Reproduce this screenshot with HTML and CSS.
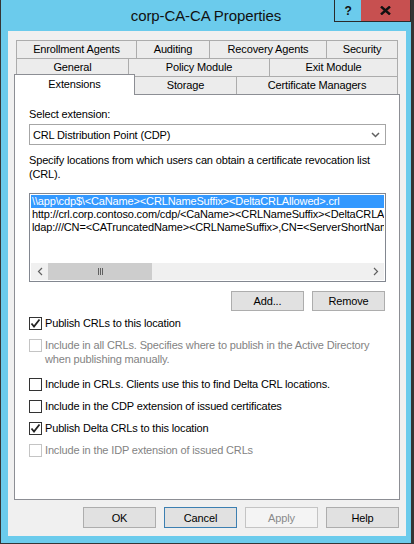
FILE: index.html
```html
<!DOCTYPE html>
<html lang="en">

<head>
    <meta charset="UTF-8">
    <meta name="viewport" content="width=device-width, initial-scale=1.0">
    <title>corp-CA-CA Properties</title>
    <link rel="stylesheet" href="styles.css">
</head>

<body>
    <div class="window">
        <div class="titlebar">
            <div></div>
            <div class="title">corp-CA-CA Properties</div>
            <div class="caption-buttons">
                <div class="cap help">?</div>
                <div class="cap close">
                    <svg width="11" height="9" viewBox="0 0 11 9">
                        <path d="M1 0.5 L10 8.5 M10 0.5 L1 8.5" stroke="#111" stroke-width="2.4" fill="none" />
                    </svg>
                </div>
            </div>
        </div>

        <div class="client">
            <div class="tabs">
                <div class="tab-row">
                    <div class="tab" style="width: 121px">Enrollment Agents</div>
                    <div class="tab" style="width: 74px">Auditing</div>
                    <div class="tab" style="width: 118px">Recovery Agents</div>
                    <div class="tab" style="width: 72px">Security</div>
                </div>
                <div class="tab-row">
                    <div class="tab" style="width: 113px">General</div>
                    <div class="tab" style="width: 142px">Policy Module</div>
                    <div class="tab" style="width: 129px">Exit Module</div>
                </div>
                <div class="tab-row">
                    <div class="tab selected" style="width: 121px">Extensions</div>
                    <div class="tab" style="width: 103px">Storage</div>
                    <div class="tab" style="width: 162px">Certificate Managers</div>
                </div>
            </div>

            <div class="page">
                <div class="label">Select extension:</div>
                <div class="dropdown">
                    <span>CRL Distribution Point (CDP)</span>
                    <svg width="9" height="6" viewBox="0 0 9 6">
                        <path d="M1 1 L4.5 4.5 L8 1" stroke="#606060" stroke-width="1.5" fill="none" />
                    </svg>
                </div>
                <div class="description">
                    Specify locations from which users can obtain a certificate revocation list (CRL).
                </div>

                <div class="listbox">
                    <div class="list-items">
                        <div class="item selected">\\app\cdp$\&lt;CaName&gt;&lt;CRLNameSuffix&gt;&lt;DeltaCRLAllowed&gt;.crl</div>
                        <div class="item">http://crl.corp.contoso.com/cdp/&lt;CaName&gt;&lt;CRLNameSuffix&gt;&lt;DeltaCRLAllowed&gt;.crl</div>
                        <div class="item">ldap:///CN=&lt;CATruncatedName&gt;&lt;CRLNameSuffix&gt;,CN=&lt;ServerShortName&gt;,CN=CDP</div>
                    </div>
                    <div class="hscroll">
                        <div class="arrow">
                            <svg width="6" height="9" viewBox="0 0 6 9">
                                <path d="M5 1 L1.5 4.5 L5 8" stroke="#606060" stroke-width="1.2" fill="none" />
                            </svg>
                        </div>
                        <div class="track">
                            <div class="thumb"><span class="grip"></span><span class="grip"></span><span class="grip"></span></div>
                        </div>
                        <div class="arrow">
                            <svg width="6" height="9" viewBox="0 0 6 9">
                                <path d="M1 1 L4.5 4.5 L1 8" stroke="#606060" stroke-width="1.2" fill="none" />
                            </svg>
                        </div>
                    </div>
                </div>

                <div class="list-buttons">
                    <button class="btn">Add...</button>
                    <button class="btn">Remove</button>
                </div>

                <div class="options">
                    <div class="check-row">
                        <span class="checkbox checked">
                            <svg width="11" height="11" viewBox="0 0 11 11">
                                <path d="M1.5 5.5 L4 8.5 L9.5 1.5" stroke="#222" stroke-width="1.8" fill="none" />
                            </svg>
                        </span>
                        <span>Publish CRLs to this location</span>
                    </div>
                    <div class="check-row disabled">
                        <span class="checkbox"></span>
                        <span>Include in all CRLs. Specifies where to publish in the Active Directory<br>when publishing manually.</span>
                    </div>
                    <div class="check-row spaced">
                        <span class="checkbox"></span>
                        <span>Include in CRLs. Clients use this to find Delta CRL locations.</span>
                    </div>
                    <div class="check-row">
                        <span class="checkbox"></span>
                        <span>Include in the CDP extension of issued certificates</span>
                    </div>
                    <div class="check-row">
                        <span class="checkbox checked">
                            <svg width="11" height="11" viewBox="0 0 11 11">
                                <path d="M1.5 5.5 L4 8.5 L9.5 1.5" stroke="#222" stroke-width="1.8" fill="none" />
                            </svg>
                        </span>
                        <span>Publish Delta CRLs to this location</span>
                    </div>
                    <div class="check-row disabled">
                        <span class="checkbox"></span>
                        <span>Include in the IDP extension of issued CRLs</span>
                    </div>
                </div>
            </div>

            <div class="dialog-buttons">
                <button class="btn">OK</button>
                <button class="btn default">Cancel</button>
                <button class="btn" disabled>Apply</button>
                <button class="btn">Help</button>
            </div>
        </div>
    </div>
</body>

</html>
```

FILE: styles.css
```css
* {
    margin: 0;
    padding: 0;
    box-sizing: border-box;
}

body {
    font-family: "Liberation Sans", Arial, sans-serif;
    font-size: 11px;
    letter-spacing: -0.15px;
    color: #000;
    background-color: #6bcbec;
}

.window {
    width: 414px;
    height: 544px;
    background-color: #6bcbec;
    border-left: 1px solid #353535;
    border-right: 3px solid #353535;
    border-bottom: 1px solid #353535;
    display: flex;
    flex-direction: column;
}

/* title bar */

.titlebar {
    height: 31px;
    display: grid;
    grid-template-columns: 1fr auto 1fr;
    align-items: start;
}

.title {
    font-size: 15px;
    letter-spacing: -0.1px;
    line-height: 31px;
    color: #111;
}

.caption-buttons {
    justify-self: end;
    display: flex;
    height: 22px;
    border: 1px solid #2a2a2a;
    border-top: none;
}

.cap {
    display: flex;
    align-items: center;
    justify-content: center;
    height: 21px;
}

.help {
    width: 26px;
    font-weight: bold;
    font-size: 12px;
    color: #111;
}

.close {
    width: 49px;
    background-color: #c75050;
}

/* client area */

.client {
    margin-left: 7px;
    width: 398px;
    height: 505px;
    background-color: #f0f0f0;
    padding: 9px 6px 0;
}

.tabs {
    margin-left: 2px;
}

.tab-row {
    display: flex;
    align-items: flex-start;
}

.tab {
    flex: none;
    height: 18px;
    margin-left: -1px;
    border: 1px solid #acacac;
    border-bottom: none;
    background-color: #ececec;
    text-align: center;
    line-height: 17px;
}

.tab:first-child {
    margin-left: 0;
}

.tab.selected {
    position: relative;
    z-index: 1;
    height: 21px;
    margin: -2px 0 -1px -2px;
    background-color: #fff;
    border-color: #8c8e94;
    line-height: 19px;
}

.page {
    width: 386px;
    height: 406px;
    background-color: #fff;
    border: 1px solid #8c8e94;
    padding: 12px 13px 0 14px;
    line-height: 14px;
}

.label {
    margin-bottom: 3px;
}

.dropdown {
    height: 21px;
    border: 1px solid #a6a6a6;
    background-color: #fff;
    display: flex;
    align-items: center;
    justify-content: space-between;
    padding: 0 5px 0 3px;
}

.description {
    margin-top: 8px;
    width: 350px;
}

/* list of locations */

.listbox {
    margin-top: 12px;
    height: 89px;
    border: 1px solid #828790;
    padding: 1px;
    display: flex;
    flex-direction: column;
}

.list-items {
    flex: 1;
    overflow: hidden;
}

.item {
    height: 13px;
    line-height: 13px;
    padding-left: 1px;
    white-space: nowrap;
    overflow: hidden;
}

.item.selected {
    background-color: #3399ff;
    color: #fff;
}

.hscroll {
    height: 17px;
    display: flex;
    background-color: #f0f0f0;
}

.arrow {
    width: 17px;
    display: flex;
    align-items: center;
    justify-content: center;
}

.track {
    flex: 1;
    display: flex;
}

.thumb {
    width: 104px;
    background-color: #cdcdcd;
    display: flex;
    align-items: center;
    justify-content: center;
    gap: 1px;
}

.grip {
    width: 1px;
    height: 7px;
    background-color: #606060;
}

.list-buttons {
    margin-top: 9px;
    display: flex;
    justify-content: flex-end;
    gap: 8px;
    padding-right: 1px;
}

.btn {
    width: 73px;
    height: 21px;
    font-family: inherit;
    font-size: 11px;
    letter-spacing: -0.15px;
    color: #000;
    background-color: #e1e1e1;
    border: 1px solid #adadad;
}

.list-buttons .btn {
    height: 20px;
}

.btn.default {
    border-color: #3c7fb1;
}

.btn:disabled {
    background-color: #f4f4f4;
    border-color: #c4c4c4;
    color: #8a8a8a;
}

/* checkboxes */

.options {
    margin-top: 5px;
    display: flex;
    flex-direction: column;
    gap: 8px;
}

.check-row {
    display: flex;
    align-items: flex-start;
    gap: 3px;
}

.check-row.spaced {
    margin-top: 3px;
}

.checkbox {
    flex: none;
    width: 13px;
    height: 13px;
    margin-top: 1px;
    border: 1px solid #333;
    background-color: #fff;
    display: flex;
    align-items: center;
    justify-content: center;
}

.check-row.disabled {
    color: #838383;
}

.check-row.disabled .checkbox {
    border-color: #c4c4c4;
}

.dialog-buttons {
    margin-top: 7px;
    display: flex;
    justify-content: flex-end;
    gap: 8px;
    padding-right: 1px;
}
```
